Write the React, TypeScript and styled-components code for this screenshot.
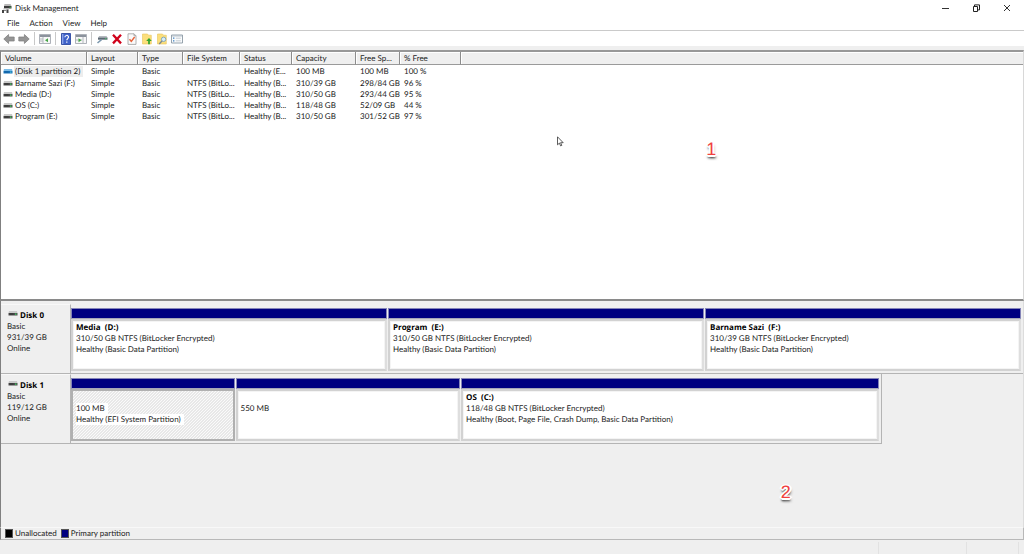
import React from "react";
import styled, { createGlobalStyle, css } from "styled-components";

const Global = createGlobalStyle`
  *, *::before, *::after { box-sizing: border-box; }
  body {
    margin: 0;
    background: #efefef;
    color: #1c1c1c;
    font-family: Lato, "Open Sans", sans-serif;
    font-size: 8px;
    line-height: 11px;
    text-rendering: geometricPrecision;
  }
`;

const Window = styled.div`
  display: flex;
  flex-direction: column;
  min-height: 100vh;
`;

const TitleBar = styled.header`
  display: flex;
  align-items: center;
  height: 16px;
  padding: 0 2px 0 2px;
  background: #fff;
`;

const Title = styled.h1`
  flex: 1;
  margin: 0 0 0 3px;
  font-size: 8px;
  font-weight: 400;
`;

const PlainButton = styled.button`
  display: flex;
  align-items: center;
  justify-content: center;
  padding: 0;
  border: 0;
  background: none;
  color: inherit;
  font: inherit;
  text-rendering: inherit;
`;

const CaptionButton = styled(PlainButton)`
  width: 31px;
  height: 15px;
`;

const MenuBar = styled.nav`
  display: flex;
  gap: 10px;
  height: 15px;
  padding-left: 7px;
  border-bottom: 1px solid #cacaca;
  background: #fff;
`;

const ToolBar = styled.div`
  display: flex;
  align-items: center;
  gap: 3px;
  height: 15px;
  padding-left: 3px;
  background: #fff;
`;

const ToolButton = styled(PlainButton)`
  width: 12px;
  height: 12px;
`;

const Separator = styled.span`
  width: 1px;
  height: 13px;
  margin: 0 1px;
  background: #c8c8c8;
`;

const VolumePane = styled.section`
  position: relative;
  flex: 251 0 0;
  margin-top: 4px;
  border-top: 2px solid #989898;
  border-left: 1px solid #808080;
  border-bottom: 2px solid #8a8a8a;
  border-right: 1px solid #d8d8d8;
  background: #fff;
`;

const VolumeTable = styled.table`
  width: 100%;
  border-collapse: separate;
  border-spacing: 0;
  table-layout: fixed;

  th, td {
    overflow: hidden;
    padding: 0 0 0 4px;
    text-align: left;
    white-space: nowrap;
    font-weight: 400;
  }
  th {
    height: 13px;
    border-right: 1px solid #8c8c8c;
    border-bottom: 1px solid #9a9a9a;
    box-shadow: inset 1px 1px 0 #fff;
    background: #efefef;
  }
  th:last-child { border-right: 0; }
  td { height: 11px; }
  tr:first-child td { height: 13px; }
  td:first-child { padding: 0 0 0 2px; }
`;

const VolumeName = styled.span<{ $selected?: boolean }>`
  display: inline-block;
  padding: 0 3px 0 1px;
  ${(p) => p.$selected && css`background: #ededed;`}
`;

const VolumeCell = styled.div`
  display: flex;
  align-items: center;
  gap: 1px;
  height: 11px;
`;

const GraphPane = styled.section`
  position: relative;
  flex: 226 0 0;
  padding-top: 3px;
  border-left: 1px solid #808080;
  border-right: 1px solid #dcdcdc;
`;

const DiskRow = styled.article<{ $share: number }>`
  display: flex;
  width: ${(p) => p.$share}%;
  height: 70px;
  border-bottom: 1px solid #b4b4b4;
  border-right: ${(p) => (p.$share < 100 ? "1px solid #b4b4b4" : "0")};
`;

const DiskInfo = styled.div`
  width: 70px;
  flex: none;
  padding: 5px 0 0 6px;
  border-top: 1px solid #f8f8f8;
  border-right: 1px solid #b4b4b4;
`;

const DiskName = styled.h2`
  display: flex;
  gap: 2px;
  margin: 0;
  padding-left: 1px;
  font-family: "Open Sans", sans-serif;
  font-size: 8px;
  font-weight: 700;
  line-height: 11px;
  color: #000;
`;

const Line = styled.p`
  margin: 0;
  min-height: 11px;
  white-space: nowrap;
`;

const Partitions = styled.div`
  display: flex;
  flex: 1;
  gap: 1px;
  padding: 4px 2px 2px 0;
  min-width: 0;
`;

const Partition = styled.div<{ $size: number }>`
  display: flex;
  flex-direction: column;
  flex: ${(p) => p.$size} 1 0;
  min-width: 0;
`;

const Stripe = styled.div`
  height: 11px;
  border: 1px solid #8484b8;
  border-bottom-color: #a8a8b8;
  background: #000080;
`;

const PartitionBody = styled.div<{ $selected?: boolean }>`
  flex: 1;
  overflow: hidden;
  padding: 1px 3px;
  border: 2px solid #d2d2d2;
  border-right-color: #dedede;
  box-shadow: 0 0 0 1px #f4f4f4 inset;
  background: #fff;
  ${(p) =>
    p.$selected &&
    css`
      border-color: #b0b0b0;
      box-shadow: none;
      background: linear-gradient(135deg, #e8e8e8 25%, #fafafa 25% 50%, #e8e8e8 50% 75%, #fafafa 75%);
      background-size: 3px 3px;
    `}
`;

const PartitionName = styled(Line)`
  font-family: "Open Sans", sans-serif;
  font-weight: 700;
  color: #000;
  white-space: pre;
`;

const Label = styled.span<{ $selected?: boolean }>`
  display: inline-block;
  padding-right: 3px;
  ${(p) => p.$selected && css`background: #fff;`}
`;

const Legend = styled.footer`
  display: flex;
  align-items: center;
  gap: 4px;
  height: 13px;
  padding-left: 4px;
  border-top: 1px solid #f8f8f8;
  border-bottom: 1px solid #b8b8b8;
  border-left: 1px solid #808080;
  border-right: 1px solid #b8b8b8;
`;

const LegendItem = styled.span`
  display: flex;
  align-items: center;
  gap: 2px;
`;

const Swatch = styled.span<{ $color: string }>`
  width: 8px;
  height: 9px;
  border: 1px solid #555;
  background: ${(p) => p.$color};
`;

const StatusBar = styled.div`
  display: grid;
  grid-template-columns: 1fr 88px 52px 5px;
  height: 14px;
  padding-top: 2px;
`;

const StatusCell = styled.span`
  border-right: 1px solid #e2e2e2;
`;

const Marker = styled.span<{ $x: string; $y: string }>`
  position: absolute;
  left: ${(p) => p.$x};
  top: ${(p) => p.$y};
  color: #f0413f;
  font-family: "Liberation Sans", sans-serif;
  font-size: 18px;
  line-height: 16px;
  text-shadow: -1px -1px 0 #fff, 1px -1px 0 #fff, -1px 1px 0 #fff, 1px 1px 0 #fff,
    2px 0 0 #fff, -2px 0 0 #fff, 0 2px 0 #fff, 0 3px 2px #444, 1px 3px 3px #666;
`;

const Pointer = styled.svg`
  position: absolute;
  left: 54.4%;
  top: 34%;
`;

const DriveIcon = ({ selected = false }: { selected?: boolean }) => (
  <svg width="10" height="8" viewBox="0 0 10 8" aria-hidden="true">
    <path d="M1 1h8l.5 2h-9z" fill={selected ? "#7cbde8" : "#c9c9c9"} />
    <path d="M.5 3h9v2.5h-9z" fill={selected ? "#1671b8" : "#4a4a4a"} />
    <path d="M1.5 4h4" stroke={selected ? "#0e5590" : "#222"} strokeWidth=".7" />
    <path d="M7 3.6h1.5v1.2H7z" fill={selected ? "#4fc3d8" : "#3fd060"} />
  </svg>
);

const AppIcon = () => (
  <svg width="10" height="11" viewBox="0 0 10 11" aria-hidden="true">
    <path d="M2.5 1h6l1 2H2z" fill="#b8b8b8" />
    <path d="M2 3h7.5v2.5H2z" fill="#3a3a3a" />
    <path d="M7.5 3.7H9v1H7.5z" fill="#3fae55" />
    <path d="M1 5.5h6v1H1z" fill="#c8c8c8" />
    <path d="M0 7h2v3H0zM4.5 6.5h2V10h-2z" fill="#444" />
    <path d="M2 7.5h2.5" stroke="#888" />
  </svg>
);

const ArrowIcon = ({ back = false }: { back?: boolean }) => (
  <svg width="12" height="12" viewBox="0 0 12 12" aria-hidden="true">
    <path
      d={back ? "M5.6 1.5 .8 6l4.8 4.5V8h5.6V4H5.6z" : "M6.4 1.5 11.2 6l-4.8 4.5V8H.8V4h5.6z"}
      fill="#959595"
      stroke="#7c7c7c"
      strokeWidth=".7"
    />
  </svg>
);

const PanelIcon = ({ flip = false }: { flip?: boolean }) => (
  <svg width="12" height="12" viewBox="0 0 12 12" aria-hidden="true">
    <path d="M.5 1.5h11v9H.5z" fill="#f7f7f7" stroke="#9aa0a8" strokeWidth=".8" />
    <path d="M1 2h10v2H1z" fill="#8c939d" />
    <path d={flip ? "M8 4v6.5M1 7h6" : "M4 4v6.5M1 6h3M1 8h3"} stroke="#b3b8be" />
    <path d={flip ? "M3.5 5.2l3 2-3 2z" : "M6 7.2l3-2v4z"} fill="#46a546" />
  </svg>
);

const HelpIcon = () => (
  <svg width="12" height="12" viewBox="0 0 12 12" aria-hidden="true">
    <path d="M1.5.5h9v11h-9z" fill="#3f62c9" stroke="#3a55a8" />
    <path d="M2 1h1.4v10H2z" fill="#8aa3ea" />
    <path d="M4.9 4.3c0-2.4 3.6-2.4 3.6-.2 0 1.5-1.7 1.5-1.7 3.2M6.8 8.4v1.3" fill="none" stroke="#fff" strokeWidth="1.2" />
  </svg>
);

const ConnectIcon = () => (
  <svg width="12" height="12" viewBox="0 0 12 12" aria-hidden="true">
    <path d="M3 3h7.5l1 1.5H2.5z" fill="#b4b9be" />
    <path d="M2 4.5h9.5v2.2H2z" fill="#5c6974" />
    <path d="M9 5.2h1.5v1H9z" fill="#4cc568" />
    <path d="M5.5 6.7 1.5 10" stroke="#7b97ad" strokeWidth="1.5" />
  </svg>
);

const DeleteIcon = () => (
  <svg width="12" height="12" viewBox="0 0 12 12" aria-hidden="true">
    <path d="M2 1.8 10 10.4M10 1.8 2 10.4" stroke="#d0021b" strokeWidth="2.3" />
  </svg>
);

const CheckPageIcon = () => (
  <svg width="12" height="12" viewBox="0 0 12 12" aria-hidden="true">
    <path d="M2 .8h6l2 2v8.6H2z" fill="#fafafa" stroke="#9c9c9c" strokeWidth=".8" />
    <path d="M8 .8v2h2" fill="none" stroke="#9c9c9c" strokeWidth=".8" />
    <path d="M3.5 6.3 5.3 8.4 8.6 4" fill="none" stroke="#e8633a" strokeWidth="1.4" />
  </svg>
);

const FolderIcon = ({ search = false }: { search?: boolean }) => (
  <svg width="12" height="12" viewBox="0 0 12 12" aria-hidden="true">
    <path d="M1.5 1h5l1 1.2h2.8V11H1.5z" fill="#fbdf7c" stroke="#e8c55a" strokeWidth=".6" />
    {search ? (
      <>
        <circle cx="7.6" cy="6.3" r="2.2" fill="#d7edf8" stroke="#7aa0b8" strokeWidth=".9" />
        <path d="M6 8 3.2 11" stroke="#7d8890" strokeWidth="1.3" />
      </>
    ) : (
      <path d="M8 5 5.2 8h1.9v3.3h1.8V8h1.9z" fill="#35a62f" />
    )}
  </svg>
);

const ListIcon = () => (
  <svg width="12" height="12" viewBox="0 0 12 12" aria-hidden="true">
    <path d="M.5 2h11v8H.5z" fill="#fafcfd" stroke="#8b98a4" strokeWidth=".9" />
    <path d="M1 3h10" stroke="#a8b4bf" strokeWidth=".8" />
    <path d="M2 5.2h1.4M2 7.8h1.4" stroke="#3d7fc0" strokeWidth="1.3" />
    <path d="M4.8 5.2h5M4.8 7.8h5" stroke="#b6bec6" strokeWidth=".8" />
  </svg>
);

const columns = [
  { name: "Volume", width: 86 },
  { name: "Layout", width: 51 },
  { name: "Type", width: 45 },
  { name: "File System", width: 57 },
  { name: "Status", width: 52 },
  { name: "Capacity", width: 64 },
  { name: "Free Sp...", width: 44 },
  { name: "% Free", width: 61 },
];

const volumes = [
  ["(Disk 1 partition 2)", "Simple", "Basic", "", "Healthy (E...", "100 MB", "100 MB", "100 %"],
  ["Barname Sazi (F:)", "Simple", "Basic", "NTFS (BitLo...", "Healthy (B...", "310/39 GB", "298/84 GB", "96 %"],
  ["Media (D:)", "Simple", "Basic", "NTFS (BitLo...", "Healthy (B...", "310/50 GB", "293/44 GB", "95 %"],
  ["OS (C:)", "Simple", "Basic", "NTFS (BitLo...", "Healthy (B...", "118/48 GB", "52/09 GB", "44 %"],
  ["Program (E:)", "Simple", "Basic", "NTFS (BitLo...", "Healthy (B...", "310/50 GB", "301/52 GB", "97 %"],
];

type Part = { name: string; size: string; state: string; share: number; selected?: boolean };

const disks: { name: string; capacity: string; share: number; parts: Part[] }[] = [
  {
    name: "Disk 0",
    capacity: "931/39 GB",
    share: 100,
    parts: [
      { name: "Media  (D:)", size: "310/50 GB NTFS (BitLocker Encrypted)", state: "Healthy (Basic Data Partition)", share: 1 },
      { name: "Program  (E:)", size: "310/50 GB NTFS (BitLocker Encrypted)", state: "Healthy (Basic Data Partition)", share: 1 },
      { name: "Barname Sazi  (F:)", size: "310/39 GB NTFS (BitLocker Encrypted)", state: "Healthy (Basic Data Partition)", share: 1 },
    ],
  },
  {
    name: "Disk 1",
    capacity: "119/12 GB",
    share: 86.2,
    parts: [
      { name: "", size: "100 MB", state: "Healthy (EFI System Partition)", share: 164, selected: true },
      { name: "", size: "550 MB", state: "", share: 225 },
      { name: "OS  (C:)", size: "118/48 GB NTFS (BitLocker Encrypted)", state: "Healthy (Boot, Page File, Crash Dump, Basic Data Partition)", share: 419 },
    ],
  },
];

export default function App() {
  return (
    <Window>
      <Global />
      <TitleBar>
        <AppIcon />
        <Title>Disk Management</Title>
        <CaptionButton aria-label="Minimize">
          <svg width="8" height="8"><path d="M1 4.5h7" stroke="#333" /></svg>
        </CaptionButton>
        <CaptionButton aria-label="Restore">
          <svg width="8" height="8" fill="none" stroke="#222"><path d="M1.5 2.5h4v5h-4zM2.5 2V.9h5v5H6" /></svg>
        </CaptionButton>
        <CaptionButton aria-label="Close">
          <svg width="8" height="8"><path d="M1 1l6 6M7 1 1 7" stroke="#333" /></svg>
        </CaptionButton>
      </TitleBar>
      <MenuBar>
        {["File", "Action", "View", "Help"].map((m) => (
          <PlainButton key={m}>{m}</PlainButton>
        ))}
      </MenuBar>
      <ToolBar>
        <ToolButton aria-label="Back"><ArrowIcon back /></ToolButton>
        <ToolButton aria-label="Forward"><ArrowIcon /></ToolButton>
        <Separator />
        <ToolButton aria-label="Show console tree"><PanelIcon /></ToolButton>
        <Separator />
        <ToolButton aria-label="Help"><HelpIcon /></ToolButton>
        <ToolButton aria-label="Show action pane"><PanelIcon flip /></ToolButton>
        <Separator />
        <ToolButton aria-label="Refresh"><ConnectIcon /></ToolButton>
        <ToolButton aria-label="Delete"><DeleteIcon /></ToolButton>
        <ToolButton aria-label="Properties"><CheckPageIcon /></ToolButton>
        <ToolButton aria-label="Open"><FolderIcon /></ToolButton>
        <ToolButton aria-label="Explore"><FolderIcon search /></ToolButton>
        <ToolButton aria-label="Settings"><ListIcon /></ToolButton>
      </ToolBar>
      <VolumePane>
        <VolumeTable>
          <colgroup>
            {columns.map((c) => <col key={c.name} width={c.width} />)}
            <col />
          </colgroup>
          <thead>
            <tr>
              {columns.map((c) => <th key={c.name} scope="col">{c.name}</th>)}
              <th />
            </tr>
          </thead>
          <tbody>
            {volumes.map(([name, ...cells], i) => (
              <tr key={name}>
                <td>
                  <VolumeCell>
                    <DriveIcon selected={i === 0} />
                    <VolumeName $selected={i === 0}>{name}</VolumeName>
                  </VolumeCell>
                </td>
                {cells.map((c, n) => <td key={n}>{c}</td>)}
                <td />
              </tr>
            ))}
          </tbody>
        </VolumeTable>
        <Pointer width="7" height="11" viewBox="0 0 7 11" aria-hidden="true">
          <path d="M.5.8v8l1.9-1.7 1.2 2.8 1.2-.5-1.2-2.7h2.6z" fill="#fff" stroke="#333" strokeWidth=".8" />
        </Pointer>
        <Marker $x="69%" $y="36%">1</Marker>
      </VolumePane>
      <GraphPane>
        {disks.map((d) => (
          <DiskRow key={d.name} $share={d.share}>
            <DiskInfo>
              <DiskName><DriveIcon />{d.name}</DiskName>
              <Line>Basic</Line>
              <Line>{d.capacity}</Line>
              <Line>Online</Line>
            </DiskInfo>
            <Partitions>
              {d.parts.map((p) => (
                <Partition key={p.name + p.size} $size={p.share}>
                  <Stripe />
                  <PartitionBody $selected={p.selected}>
                    <PartitionName>{p.name}</PartitionName>
                    <Line><Label $selected={p.selected}>{p.size}</Label></Line>
                    <Line><Label $selected={p.selected}>{p.state}</Label></Line>
                  </PartitionBody>
                </Partition>
              ))}
            </Partitions>
          </DiskRow>
        ))}
        <Marker $x="76.3%" $y="81%">2</Marker>
      </GraphPane>
      <Legend>
        <LegendItem><Swatch $color="#000" />Unallocated</LegendItem>
        <LegendItem><Swatch $color="#000080" />Primary partition</LegendItem>
      </Legend>
      <StatusBar>
        <StatusCell /><StatusCell /><StatusCell />
      </StatusBar>
    </Window>
  );
}
